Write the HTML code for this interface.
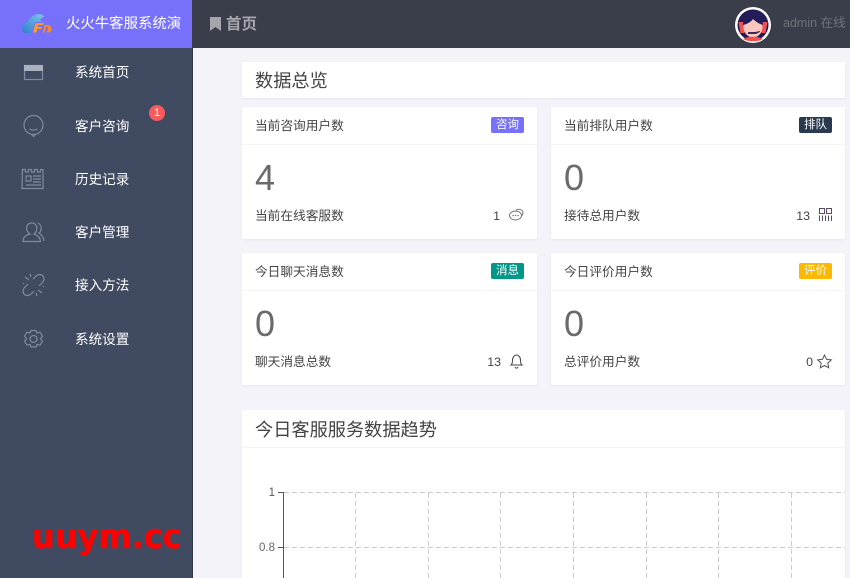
<!DOCTYPE html>
<html lang="zh"><head><meta charset="utf-8"><title>首页</title>
<style>
*{box-sizing:border-box;margin:0;padding:0}
html,body{width:850px;height:578px;overflow:hidden;background:#f3f3f9;font-family:"Liberation Sans","Noto Sans CJK SC",sans-serif;color:#333}
#page{position:relative;width:850px;height:578px;overflow:hidden}
#side{position:absolute;left:0;top:48px;width:193px;height:530px;background:#404a60;border-right:1px solid #2f3747}
#logo{position:absolute;left:0;top:0;width:192px;height:48px;background:#7670fa}
#logo span{position:absolute;left:66px;top:14px;font-size:14.4px;line-height:20px;color:#fff;white-space:nowrap}
#head{position:absolute;left:192px;top:0;width:658px;height:48px;background:#3a3e4a}
.m{position:absolute;left:75px;font-size:13.6px;line-height:20px;color:#fff;white-space:nowrap}
.ic{position:absolute;left:0;top:0}
.card{position:absolute;background:#fff;border-radius:2px;box-shadow:0 1px 2px rgba(40,40,80,.06)}
.t{position:absolute;left:13px;top:10px;font-size:12.7px;line-height:18px;color:#444;white-space:nowrap}
.line{position:absolute;left:0;right:0;top:37px;height:1px;background:#f5f5f7}
.b{position:absolute;right:13px;top:10px;width:33px;height:16px;border-radius:2px;color:#fff;font-size:11.5px;line-height:16px;text-align:center}
.n{position:absolute;left:13px;top:50px;font-size:36px;line-height:42px;color:#6a6a6a}
.l{position:absolute;left:13px;top:100px;font-size:12.7px;line-height:18px;color:#444;white-space:nowrap}
.v{position:absolute;top:100px;font-size:12.4px;line-height:18px;color:#444}
.h{position:absolute;left:13px;font-size:18.2px;line-height:26px;color:#444;white-space:nowrap}
svg{position:absolute;overflow:visible}
</style></head><body><div id="page">
<div id="side"></div>
<div id="logo">
<svg style="left:0;top:0" width="60" height="48" viewBox="0 0 60 48"><defs><linearGradient id="g" x1="0" y1="1" x2="1" y2="0"><stop offset="0" stop-color="#2f7fd0"/><stop offset="1" stop-color="#7ec5e8"/></linearGradient></defs><path d="M26 33c-3 0-4.500-3-4-6 .5-3 3-5 6-5 1-4 6-8 11-8 2 0 4 1 5 2.500-2 1-3 2-4 4 1 0 2 .5 2.500 1-3 0-5 0-7 1-2 1-3 5-4 10.500z" fill="url(#g)"/><path d="M33 32.500l2-8q.5-1.500 2-1.500h7l-.7 2h-5l-.5 2h4l-.5 2h-4l-.7 3.500z" fill="#f79a2b"/><path d="M43 32.500l1.500-7.500h3c3 0 4 2.500 4 4 0 2.500-1.500 3.500-3 3.500h-1.500l1-5.500h-2l-1 5.500z" fill="#f58a26"/></svg>
<span>火火牛客服系统演</span></div>
<div id="head">
<svg style="left:18px;top:17px" width="11" height="14" viewBox="0 0 11 14"><path d="M0 0h11v14L5.500 10 0 14z" fill="#a4a6ab"/></svg>
<span style="position:absolute;left:34px;top:13px;font-size:15.5px;line-height:23px;font-weight:bold;color:#a4a6ab">首页</span>
<svg style="left:543px;top:7px" width="36" height="36" viewBox="0 0 36 36"><circle cx="18" cy="18" r="18" fill="#fff"/><circle cx="18" cy="18" r="15.500" fill="#241c58"/><path d="M3.500 15h6v11h-4zM32.500 15h-6v11h4z" fill="#f0504f"/><ellipse cx="18" cy="20" rx="9.500" ry="10.500" fill="#fbc6bd"/><path d="M8 18c0-7 5-11 10-11s10 4 10 11c-4-1-8-4-10-6-2 3-6 5-10 6z" fill="#241c58"/><path d="M13 27h8l4-2v-1l-5 1h-7z" fill="#3a2a55"/><path d="M8 32c5-3 15-3 20 0-5 3-15 3-20 0z" fill="#f0504f"/></svg>
<span style="position:absolute;left:591px;top:13px;font-size:12.5px;line-height:20px;color:#6f727a;white-space:nowrap">admin 在线</span>
</div>

<svg class="ic" width="60" height="360" fill="none" stroke="#7f8aa0" stroke-width="1.200">
<rect x="24.500" y="65.500" width="18" height="14"/><rect x="24" y="65" width="19" height="6" fill="#aab1c0" stroke="none"/>
<circle cx="33.500" cy="125" r="9.500"/><path d="M29.500 129c2 1.500 6 1.500 8 0M31.500 134.500l2 2 2-2"/>
<path d="M22.500 169.500h3v2.500h3v-2.500h3v2.500h3v-2.500h3v2.500h3v-2.500h2.500v19h-21z"/><path d="M26 176h5v5h-5zM33 176h8M33 179h8M33 182h8M26 185h15"/>
<path d="M23 241.500c0-5 3.500-6.500 7-7.500-3-2-4-5-3-8 1-3 5-4 8-2 3 3 2 8-1 10 3 1 6 3 6.500 7.500z"/><path d="M38 223c4 2 4 8 1 10 3 2 4.500 4 5 8"/>
<path d="M33 279l3-3c2-2 5.500-2 7 0 2 2 1 5-1 7l-3 3M34 291l-3 3c-2 2-5.500 2-7 0-2-2-1-5 1-7l3-3M25 277l4 3M30 274l1 3M42 293l-4-3M37 296l-1-3M24 283l-1 1M43 287l1-1"/>
<path d="M31 330.500h5l1 2.500 3-.8 2.500 4-2 2.500 2 2.500-2.500 4-3-.8-1 2.500h-5l-1-2.500-3 .8-2.500-4 2-2.500-2-2.500 2.500-4 3 .8z"/><circle cx="33.500" cy="339" r="3.500"/>
</svg>
<span class="m" style="top:63px">系统首页</span>
<span class="m" style="top:117px">客户咨询</span>
<span class="m" style="top:170px">历史记录</span>
<span class="m" style="top:223px">客户管理</span>
<span class="m" style="top:276px">接入方法</span>
<span class="m" style="top:330px">系统设置</span>
<div style="position:absolute;left:149px;top:105px;width:16px;height:16px;border-radius:8px;background:#f95a5c;color:#fff;font-size:11px;line-height:16px;text-align:center">1</div>
<div style="position:absolute;left:32px;top:516px;font:bold 34px/42px 'DejaVu Sans',sans-serif;color:#ff0000;white-space:nowrap;transform:scaleX(.94);transform-origin:left;-webkit-text-stroke:.4px #f00">uuym.cc</div>

<div class="card" style="left:242px;top:62px;width:603px;height:36px"><span class="h" style="top:6px">数据总览</span></div>

<div class="card" style="left:242px;top:107px;width:295px;height:132px"><span class="t">当前咨询用户数</span><div class="line"></div><span class="b" style="background:#7670fa">咨询</span><span class="n">4</span><span class="l">当前在线客服数</span><span class="v" style="right:37px">1</span>
<svg style="left:267px;top:101px" width="15" height="14" viewBox="0 0 15 14" fill="none" stroke="#666" stroke-width=".9"><ellipse cx="6.500" cy="7.500" rx="6" ry="4.500"/><path d="M7 2c3-1.500 7-.5 7 3 0 1-.5 2-1 2.500"/><path d="M3.500 7.500h1.200M6 7.500h1.200M8.500 7.500h1.200" stroke-width="1.200"/></svg></div>

<div class="card" style="left:551px;top:107px;width:294px;height:132px"><span class="t">当前排队用户数</span><div class="line"></div><span class="b" style="background:#2a3a4e">排队</span><span class="n">0</span><span class="l">接待总用户数</span><span class="v" style="right:35px">13</span>
<svg style="left:268px;top:101px" width="13" height="13" viewBox="0 0 13 13" fill="none" stroke="#5b4a60"><path d="M.5.500h5v5h-5zM7.500.500h5v5h-5zM.5 7.500v5.500M3.500 7.500v5.500M6.500 7.500v5.500M9.500 7.500v5.500M12.500 7.500v5.500"/></svg></div>

<div class="card" style="left:242px;top:253px;width:295px;height:132px"><span class="t">今日聊天消息数</span><div class="line"></div><span class="b" style="background:#009688">消息</span><span class="n">0</span><span class="l">聊天消息总数</span><span class="v" style="right:36px">13</span>
<svg style="left:268px;top:101px" width="13" height="15" viewBox="0 0 13 15" fill="none" stroke="#444"><path d="M1 11c1.500-1 1.500-3 1.500-5 0-3 2-5 4-5s4 2 4 5c0 2 0 4 1.500 5zM5 13c.5 1.500 2.500 1.500 3 0"/></svg></div>

<div class="card" style="left:551px;top:253px;width:294px;height:132px"><span class="t">今日评价用户数</span><div class="line"></div><span class="b" style="background:#ffb800">评价</span><span class="n">0</span><span class="l">总评价用户数</span><span class="v" style="right:32px">0</span>
<svg style="left:266px;top:101px" width="15" height="14" viewBox="0 0 15 14" fill="none" stroke="#555"><path d="M7.500 1l2 4.300 4.800.6-3.500 3.200.9 4.700-4.200-2.300-4.200 2.300.9-4.700L.7 5.900l4.800-.6z"/></svg></div>

<div class="card" style="left:242px;top:410px;width:603px;height:180px"><span class="h" style="top:7px">今日客服服务数据趋势</span><div class="line" style="background:#f3f3f6"></div></div>

<svg style="left:0;top:0" width="850" height="578" shape-rendering="crispEdges">
<g stroke="#ccc" stroke-dasharray="5 3" fill="none"><path d="M284 492.500H845M284 547.500H845M355.500 493V578M428.500 493V578M500.500 493V578M573.500 493V578M646.500 493V578M718.500 493V578M791.500 493V578"/></g>
<path d="M283.500 492V578M278 492.500h6M278 547.500h6" stroke="#555" fill="none"/>
<text x="275" y="496" text-anchor="end" font-size="11.5" fill="#555" font-family="Liberation Sans">1</text>
<text x="275" y="551" text-anchor="end" font-size="11.5" fill="#666" font-family="Liberation Sans">0.8</text>
</svg>
</div></body></html>
